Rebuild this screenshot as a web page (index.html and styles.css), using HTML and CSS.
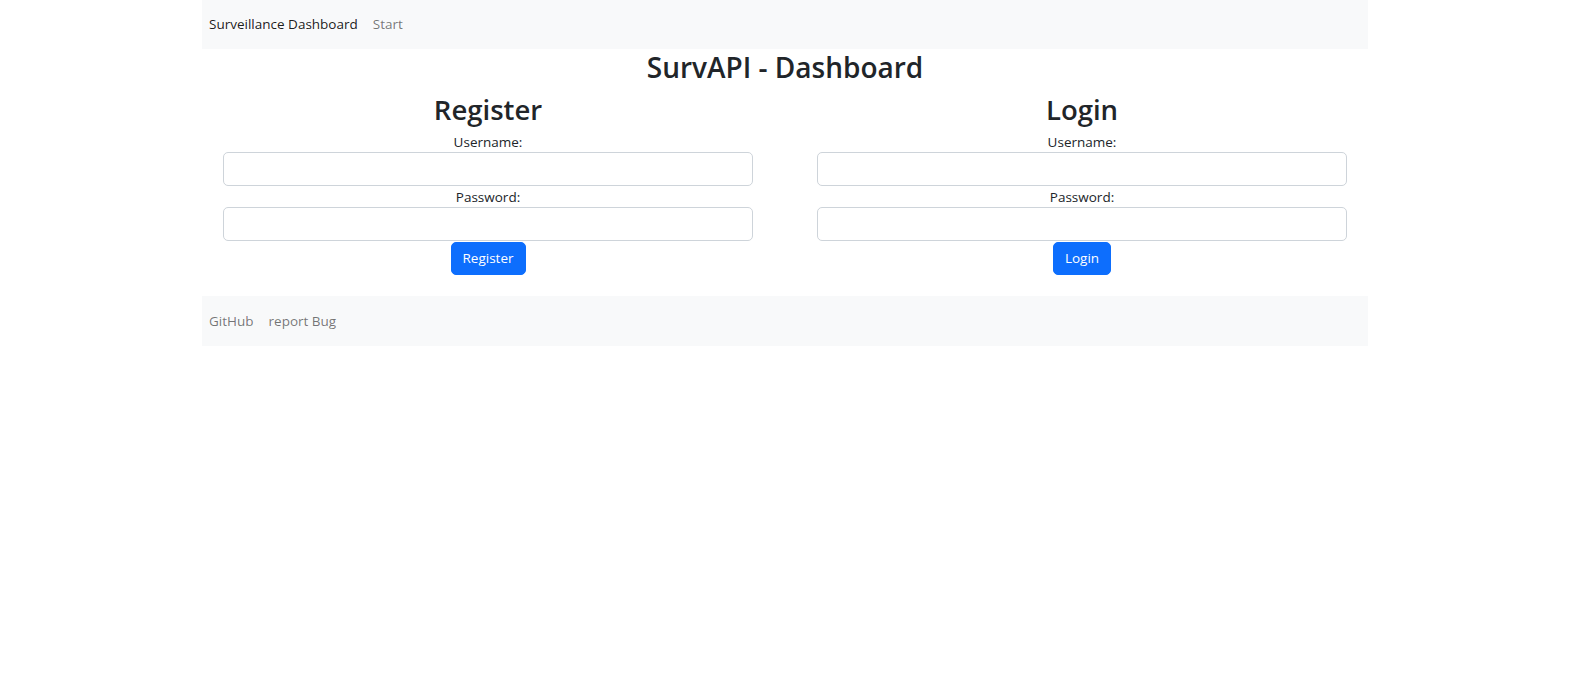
FILE: index.html
```html
<!DOCTYPE html>
<html lang="en">
<head>
<meta charset="utf-8">
<title>SurvAPI - Dashboard</title>
<link rel="stylesheet" href="styles.css">
</head>
<body>
<div class="page">
  <div class="container">
    <nav class="topbar">
      <a class="brand" href="#">Surveillance Dashboard</a>
      <a class="nav-link" href="#">Start</a>
    </nav>
    <h1 class="title">SurvAPI - Dashboard</h1>
    <div class="forms">
      <section class="panel">
        <h2 class="panel-title">Register</h2>
        <label class="field-label">Username:</label>
        <input class="field" type="text">
        <label class="field-label">Password:</label>
        <input class="field" type="password">
        <button class="btn">Register</button>
      </section>
      <section class="panel">
        <h2 class="panel-title">Login</h2>
        <label class="field-label">Username:</label>
        <input class="field" type="text">
        <label class="field-label">Password:</label>
        <input class="field" type="password">
        <button class="btn">Login</button>
      </section>
    </div>
    <footer class="footbar">
      <a class="nav-link" href="#">GitHub</a>
      <a class="nav-link" href="#">report Bug</a>
    </footer>
  </div>
</div>
</body>
</html>
```
FILE: styles.css
```css
* { box-sizing: border-box; }
html, body { margin: 0; padding: 0; background: #fff; }
body {
  font-family: "Open Sans", "Noto Sans", "Liberation Sans", sans-serif;
  font-size: 13.5px;
  line-height: 21px;
  color: #212529;
}
.page { padding-right: 19px; }
.container { width: 1166px; margin: 0 auto; }
a { text-decoration: none; }

.topbar {
  background: #f8f9fa;
  height: 49px;
  display: flex;
  align-items: center;
  gap: 15px;
  padding-left: 7px;
}
.brand { color: rgba(0,0,0,.9); }
.nav-link { color: rgba(0,0,0,.55); }

.title {
  margin: 0 0 8px;
  padding-top: 2px;
  text-align: center;
  font-size: 28px;
  line-height: 33.6px;
  font-weight: 600;
}

.forms {
  display: grid;
  grid-template-columns: 1fr 1fr;
  column-gap: 64px;
  padding: 0 21px;
}
.panel {
  display: flex;
  flex-direction: column;
  align-items: center;
}
.panel-title {
  margin: 0 0 5px;
  font-size: 27.5px;
  line-height: 33.6px;
  font-weight: 600;
}
.field-label { display: block; line-height: 21px; padding-top: 1px; margin-bottom: -1px; }
.field {
  width: 100%;
  height: 34px;
  border: 1px solid #ced4da;
  border-radius: 5px;
  background: #fff;
  font: inherit;
  padding: 5px 10px;
}
.btn {
  margin-top: 1px;
  height: 33px;
  padding: 0 11px;
  border: 1px solid #0d6efd;
  background: #0d6efd;
  color: #fff;
  border-radius: 5px;
  font: inherit;
}

.footbar {
  margin-top: 21px;
  background: #f8f9fa;
  height: 50px;
  display: flex;
  align-items: center;
  gap: 15px;
  padding-left: 7px;
}
```
